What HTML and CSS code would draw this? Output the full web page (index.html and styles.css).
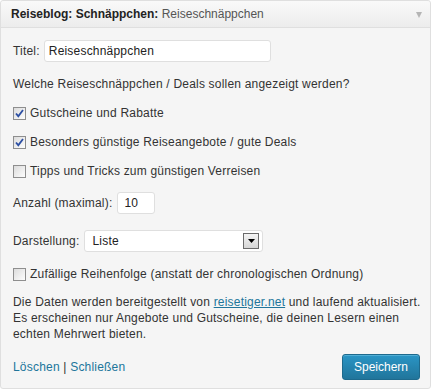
FILE: index.html
```html
<!DOCTYPE html>
<html>
<head>
<meta charset="utf-8">
<link rel="stylesheet" href="styles.css">
</head>
<body>
<div class="widget">
  <div class="head">
    <div class="title"><b>Reiseblog: Schnäppchen:</b> <span class="sub">Reiseschnäppchen</span></div>
    <span class="arrow"></span>
  </div>
  <div class="body">
    <div class="row r-title"><label>Titel:</label><div class="input wide">Reiseschnäppchen</div></div>
    <p class="q">Welche Reiseschnäppchen / Deals sollen angezeigt werden?</p>
    <div class="cb-row"><span class="cb"><svg viewBox="0 0 11 11" width="11" height="11"><path d="M2 5.5 L4.3 8.2 L9 2" fill="none" stroke="#2c4fa3" stroke-width="1.8"/></svg></span>Gutscheine und Rabatte</div>
    <div class="cb-row"><span class="cb"><svg viewBox="0 0 11 11" width="11" height="11"><path d="M2 5.5 L4.3 8.2 L9 2" fill="none" stroke="#2c4fa3" stroke-width="1.8"/></svg></span>Besonders günstige Reiseangebote / gute Deals</div>
    <div class="cb-row"><span class="cb"></span>Tipps und Tricks zum günstigen Verreisen</div>
    <div class="row r-num"><label>Anzahl (maximal):</label><div class="input num">10</div></div>
    <div class="row r-sel"><label>Darstellung:</label><div class="input sel"><span>Liste</span><span class="drop"><svg viewBox="0 0 7 4" width="7" height="4"><path d="M0 0 H7 L3.5 4 Z" fill="#000"/></svg></span></div></div>
    <div class="cb-row last"><span class="cb"></span>Zufällige Reihenfolge (anstatt der chronologischen Ordnung)</div>
    <p class="info">Die Daten werden bereitgestellt von <a href="#">reisetiger.net</a> und laufend aktualisiert. Es erscheinen nur Angebote und Gutscheine, die deinen Lesern einen echten Mehrwert bieten.</p>
    <div class="foot">
      <div class="links"><a href="#" class="plain">Löschen</a> | <a href="#" class="plain">Schließen</a></div>
      <button class="save">Speichern</button>
    </div>
  </div>
</div>
</body>
</html>
```
FILE: styles.css
```css
* { box-sizing: border-box; }
html, body { margin: 0; padding: 0; background: #fff; }
body { font-family: "Liberation Sans", Arial, sans-serif; font-size: 12px; color: #333; }
.widget { width: 431px; height: 389px; border: 1px solid #dfdfdf; border-radius: 3px; background: #f5f5f5; }
.head { height: 27px; display: flex; align-items: center; justify-content: space-between; padding: 0 8px 0 10px; background: linear-gradient(#f9f9f9, #ececec); border-bottom: 1px solid #dfdfdf; border-radius: 3px 3px 0 0; }
.title { color: #222; font-size: 12px; }
.title b { font-weight: bold; }
.sub { color: #555; }
.arrow { width: 0; height: 0; border-left: 3.5px solid transparent; border-right: 3.5px solid transparent; border-top: 6px solid #b5b5b5; margin-top: 1px; }
.body { padding: 12px 8px 0 12px; letter-spacing: 0.2px; }
.row { display: flex; align-items: center; gap: 4px; }
.r-title { height: 22px; }
.input { background: #fff; border: 1px solid #dfdfdf; border-radius: 3px; height: 22px; padding: 0 4px; display: flex; align-items: center; color: #222; font-size: 12px; }
.wide { width: 227px; }
.q { margin: 14px 0 0 0; line-height: 16px; }
.cb-row { display: flex; align-items: center; height: 16px; line-height: 16px; margin-top: 13px; }
.cb { width: 13px; height: 13px; border: 1px solid #8e8e8e; background: linear-gradient(135deg, #dcdcdc, #fdfdfd); margin-right: 4px; display: inline-flex; align-items: center; justify-content: center; flex: none; }
.cb svg { display: block; }
.r-num { margin-top: 13px; height: 22px; gap: 5px; }
.num { width: 38px; padding-left: 6px; }
.r-sel { margin-top: 16px; height: 22px; gap: 5px; }
.sel { width: 179px; justify-content: space-between; padding: 0 3px 0 7px; }
.drop { width: 16px; height: 16px; border: 1px solid #6b6b6b; background: linear-gradient(#f4f4f4, #d6d6d6); display: flex; align-items: center; justify-content: center; }
.drop svg { display: block; }
.last { margin-top: 14px; }
.info { margin: 12px -6px 0 0; line-height: 16px; }
a { color: #21759b; }
a.plain { text-decoration: none; }
.foot { display: flex; justify-content: space-between; align-items: center; margin-top: 12px; padding-right: 2px; }
.links { color: #333; }
.save { font-family: "Liberation Sans", Arial, sans-serif; font-size: 12px; letter-spacing: 0; color: #fff; background: linear-gradient(#2a95c5, #21759b); border: 1px solid #1e6a8d; border-radius: 3px; height: 26px; width: 78px; padding: 0; box-shadow: inset 0 1px 0 rgba(120,200,230,0.5); }
```
